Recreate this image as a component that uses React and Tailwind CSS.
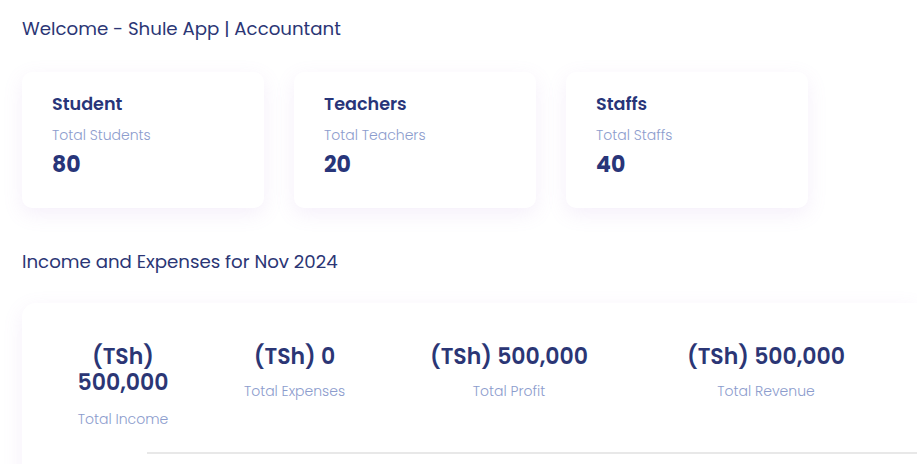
import React from "react";

const stats = [
  { title: "Student", label: "Total Students", value: "80" },
  { title: "Teachers", label: "Total Teachers", value: "20" },
  { title: "Staffs", label: "Total Staffs", value: "40" },
];

const finance = [
  { value: "(TSh) 500,000", label: "Total Income", w: "w-[142px]", wrap: true },
  { value: "(TSh) 0", label: "Total Expenses", w: "w-[201px]" },
  { value: "(TSh) 500,000", label: "Total Profit", w: "w-[228px]" },
  { value: "(TSh) 500,000", label: "Total Revenue", w: "w-[286px]" },
];

export default function App() {
  return (
    <div className="w-[917px] h-[464px] overflow-hidden bg-white font-['Poppins','Inter','Noto_Sans',sans-serif] text-[#283579]">
      <div className="pl-[22px] pt-[18px]">
        <h1 className="text-[18.2px] leading-[22px] font-normal text-[#2b3675]">
          Welcome - Shule App | Accountant
        </h1>
        <div className="mt-[32px] flex gap-[30px]">
          {stats.map((s) => (
            <div
              key={s.title}
              className="w-[242px] h-[136px] rounded-[10px] bg-white pl-[30px] pt-[20px] shadow-[0_6px_20px_rgba(170,120,210,0.12)]"
            >
              <div className="text-[17.6px] leading-[24px] font-semibold text-[#283579]">{s.title}</div>
              <div className="mt-[9px] text-[14px] leading-[20px] font-light text-[#8c9ccd]">{s.label}</div>
              <div className="mt-[5px] text-[22px] leading-[30px] font-bold text-[#283579]">{s.value}</div>
            </div>
          ))}
        </div>
        <h2 className="mt-[43px] text-[18.2px] leading-[22px] font-normal text-[#2b3675]">
          Income and Expenses for Nov 2024
        </h2>
        <div className="mt-[30px] h-[200px] rounded-tl-[14px] bg-white shadow-[0_6px_20px_rgba(170,120,210,0.12)] pt-[41px]">
          <div className="flex pl-[30px]">
            {finance.map((f) => (
              <div key={f.label} className={`${f.w} flex flex-col items-center text-center`}>
                <div
                  className={`text-[22px] leading-[26px] font-semibold text-[#2b3675] ${
                    f.wrap ? "whitespace-normal px-[4px]" : "whitespace-nowrap"
                  }`}
                >
                  {f.value}
                </div>
                <div className={`${f.wrap ? "mt-[13px]" : "mt-[11px]"} text-[14px] leading-[20px] font-light text-[#8c9ccd]`}>
                  {f.label}
                </div>
              </div>
            ))}
          </div>
          <div className="ml-[125px] mt-[23px] h-[2px] bg-[#e8e8e8]" />
        </div>
      </div>
    </div>
  );
}
